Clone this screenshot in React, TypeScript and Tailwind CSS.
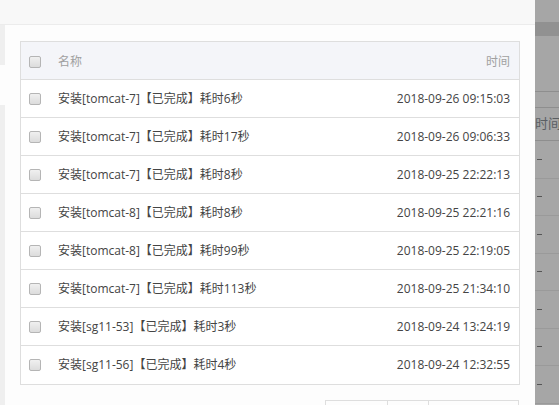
const rows = [
  { name: "安装[tomcat-7]【已完成】耗时6秒", time: "2018-09-26 09:15:03" },
  { name: "安装[tomcat-7]【已完成】耗时17秒", time: "2018-09-26 09:06:33" },
  { name: "安装[tomcat-7]【已完成】耗时8秒", time: "2018-09-25 22:22:13" },
  { name: "安装[tomcat-8]【已完成】耗时8秒", time: "2018-09-25 22:21:16" },
  { name: "安装[tomcat-8]【已完成】耗时99秒", time: "2018-09-25 22:19:05" },
  { name: "安装[tomcat-7]【已完成】耗时113秒", time: "2018-09-25 21:34:10" },
  { name: "安装[sg11-53]【已完成】耗时3秒", time: "2018-09-24 13:24:19" },
  { name: "安装[sg11-56]【已完成】耗时4秒", time: "2018-09-24 12:32:55" },
]

function Checkbox() {
  return (
    <span className="block size-[12px] rounded-[2px] border border-[#b5b5b5] bg-gradient-to-b from-[#f0f0f0] to-[#dcdcdc]" />
  )
}

export default function App() {
  return (
    <div
      className="flex h-[405px] w-[559px] overflow-hidden bg-[#a4a4a4] text-[12px]"
      style={{ fontFamily: '"Open Sans", "Noto Sans CJK SC", sans-serif' }}
    >
      <div className="flex w-[535px] shrink-0 flex-col bg-[#fdfdfd]">
        <div className="h-[25px] shrink-0 border-b border-[#ececec] bg-[#f8f8f8]" />
        <div className="flex flex-1">
          <div className="flex w-[5px] shrink-0 flex-col">
            <div className="h-[40px] bg-[#efefef]" />
            <div className="h-[40px]" />
            <div className="flex-1 bg-[#efefef]" />
          </div>
          <div className="flex-1 pl-[15px] pr-[15px] pt-[16px]">
            <div className="border border-[#dedede] bg-white">
              <div className="flex h-[38px] items-center border-b border-[#dedede] bg-[#f4f5f9] pl-[8px] pr-[9px] pt-[2px] text-[#a0a0a0]">
                <Checkbox />
                <span className="ml-[17px] flex-1">名称</span>
                <span>时间</span>
              </div>
              {rows.map((r, i) => (
                <div
                  key={i}
                  className={`flex h-[38px] items-center pl-[8px] pr-[9px] text-[#444] ${i < rows.length - 1 ? "border-b border-[#dedede]" : ""}`}
                >
                  <Checkbox />
                  <span className="ml-[17px] flex-1">{r.name}</span>
                  <span>{r.time}</span>
                </div>
              ))}
            </div>
            <div className="mt-[15px] ml-[305px] flex h-[30px] w-[194px] border border-[#dedede]">
              <div className="w-[62px] border-r border-[#dedede]" />
              <div className="w-[41px] border-r border-[#dedede]" />
              <div className="flex-1" />
            </div>
          </div>
        </div>
      </div>
      <div className="flex-1 overflow-hidden bg-[#a6a6a6]">
        <div className="mt-[22px] h-[14px] bg-[#919191]" />
        <div className="mt-[55px] border-t border-[#8e8e8e]" />
        <div className="mt-[15px] flex h-[34px] items-center whitespace-nowrap border-t border-b border-[#8e8e8e] text-[13px] text-[#5a5e63]">
          时间
        </div>
        {[0, 1, 2, 3, 4, 5, 6].map((k) => (
          <div key={k} className="flex h-[37.5px] items-center border-b border-[#9a9a9a]">
            <span className="ml-[2px] block h-px w-[5px] bg-[#555]" />
          </div>
        ))}
      </div>
    </div>
  )
}
